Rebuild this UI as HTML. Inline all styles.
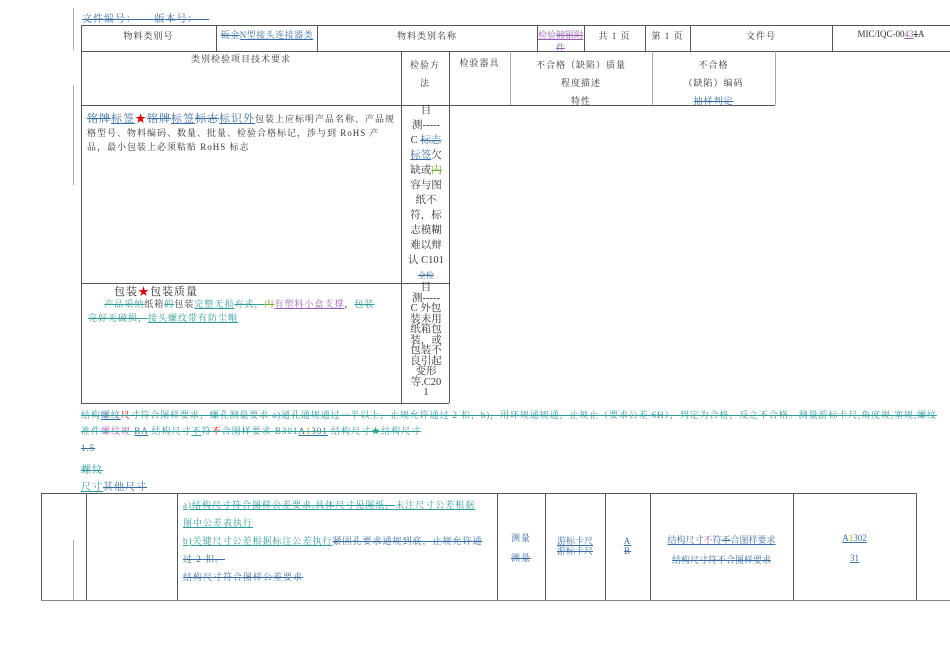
<!DOCTYPE html>
<html><head><meta charset="utf-8"><style>
body{margin:0;width:950px;height:672px;background:#fff;position:relative;overflow:hidden;font-family:"Liberation Serif","Noto Serif CJK SC",serif;font-size:9px;color:#333;letter-spacing:1px}
.a{position:absolute}
.h{position:absolute;height:0;border-top:1px solid #555}
.v{position:absolute;width:0;border-left:1px solid #555}
.g{border-color:#aaa}
.b{color:#3a6ea5}
.t{color:#2f9a9a}
.p{color:#9a5fb5}
.s{text-decoration:line-through}
.u{text-decoration:underline}
.c{text-align:center}
.r{color:#d00}
.n{letter-spacing:0}
.w{white-space:nowrap}
</style></head><body>
<div class="v g" style="left:73px;top:8px;height:42px"></div>
<div class="v g" style="left:73px;top:85px;height:100px"></div>
<div class="v g" style="left:73px;top:540px;height:60px"></div>

<div class="a b s" style="left:82px;top:10px;font-size:10px">文件编号：&nbsp;&nbsp;&nbsp;&nbsp;&nbsp;版本号：&nbsp;&nbsp;&nbsp;</div>

<div class="h" style="left:81px;top:25px;width:869px"></div>
<div class="h" style="left:81px;top:51px;width:869px"></div>
<div class="v" style="left:81px;top:25px;height:378px"></div>
<div class="v" style="left:216px;top:25px;height:26px"></div>
<div class="v" style="left:317px;top:25px;height:26px"></div>
<div class="v" style="left:537px;top:25px;height:26px"></div>
<div class="v" style="left:584px;top:25px;height:26px"></div>
<div class="v" style="left:645px;top:25px;height:26px"></div>
<div class="v" style="left:690px;top:25px;height:26px"></div>
<div class="v" style="left:832px;top:25px;height:26px"></div>
<div class="a c" style="left:81px;top:29px;width:135px">物料类别号</div>
<div class="a c b n" style="left:218px;top:29px;width:98px;height:22px;overflow:hidden;line-height:13px;letter-spacing:0.5px"><span class="s">钣金</span><span class="u">N型接头连接器类</span></div>
<div class="a c" style="left:317px;top:29px;width:220px">物料类别名称</div>
<div class="a c p u n" style="left:537px;top:29px;width:47px;height:22px;overflow:hidden;line-height:13px">检验<span class="s">镀银附件</span></div>
<div class="a c" style="left:584px;top:29px;width:61px">共 1 页</div>
<div class="a c" style="left:645px;top:29px;width:45px">第 1 页</div>
<div class="a c" style="left:690px;top:29px;width:142px">文件号</div>
<div class="a c n" style="left:832px;top:29px;width:118px">MIC/IQC-00<span class="p u">43</span><span class="s">1</span>A</div>

<div class="h" style="left:81px;top:105px;width:694px"></div>
<div class="v" style="left:401px;top:51px;height:352px"></div>
<div class="v" style="left:449px;top:51px;height:352px"></div>
<div class="v g" style="left:510px;top:51px;height:54px"></div>
<div class="v g" style="left:652px;top:51px;height:54px"></div>
<div class="v g" style="left:775px;top:51px;height:54px"></div>
<div class="a c" style="left:81px;top:52px;width:320px">类别检验项目技术要求</div>
<div class="a c" style="left:401px;top:56px;width:48px;line-height:18px">检验方<br>法</div>
<div class="a c" style="left:449px;top:56px;width:61px">检验器具</div>
<div class="a c" style="left:510px;top:56px;width:142px;line-height:18px">不合格（缺陷）质量<br>程度描述<br>特性</div>
<div class="a c" style="left:652px;top:56px;width:123px;line-height:18px">不合格<br>（缺陷）编码<br><span class="b s">抽样判定</span></div>

<div class="a w" style="left:87px;top:112px;line-height:14px"><span class="b s" style="font-size:11px">铭牌</span><span class="b u" style="font-size:11px">标签</span><span class="r" style="font-size:11px">★</span><span class="b s" style="font-size:11px">铭牌</span><span class="b u" style="font-size:11px">标签</span><span class="b s" style="font-size:11px">标志</span><span class="b u" style="font-size:11px">标识外</span>包装上应标明产品名称、产品规<br>格型号、物料编码、数量、批量、检验合格标记，涉与到 RoHS 产<br>品，最小包装上必须粘贴 RoHS 标志</div>
<div class="a c n" style="left:403px;top:103px;width:46px;font-size:10.5px;line-height:15px">目<br>测-----<br>C <span class="b s">标志</span><br><span class="b u">标签</span>欠<br>缺或<span class="s" style="color:#7a3">内</span><br>容与图<br>纸不<br>符，标<br>志模糊<br>难以辩<br>认 C101<br><span class="b s" style="font-size:8px">全检</span></div>

<div class="h" style="left:81px;top:283px;width:368px"></div>
<div class="a" style="left:114px;top:283px;font-size:11px">包装<span class="r">★</span>包装质量</div>
<div class="a w" style="left:88px;top:297px;line-height:14px">&nbsp;&nbsp;&nbsp;&nbsp;&nbsp;<span class="t s">产品采纳</span>纸箱<span class="t s">的</span>包装<span class="t u">完整无损</span><span class="t s">方式，</span><span class="s" style="color:#7a3">内</span><span class="p u">有塑料小盒支撑</span>，<span class="t s">包装</span><br><span class="t s">完好无破损，</span><span class="t u">接头螺纹带有防尘帽</span></div>
<div class="a c n" style="left:403px;top:283px;width:46px;font-size:10.5px;line-height:10.5px">目<br>测-----<br>C 外包<br>装未用<br>纸箱包<br>装，或<br>包装不<br>良引起<br>变形<br>等.C20<br>1</div>
<div class="h" style="left:81px;top:403px;width:368px"></div>

<div class="a t s w" style="left:81px;top:405px;width:869px;overflow:hidden;line-height:21px;letter-spacing:0.9px">结构<span class="b u">螺纹</span><span class="r">尺</span>寸符合图样要求，螺孔测量要求 a)通孔通规通过一半以上，止规允许通过 2 扣，b)，用环规通规通，止规止（要求公差 6H），判定为合格，反之不合格。测量游标卡尺,角度规,塞规,螺纹</div>
<div class="a t s w" style="left:81px;top:426px;line-height:10px">准件<span class="p">螺纹规</span> <span class="b u">BA</span> 结构尺寸<span class="u">不</span>符<span class="r">不</span>合图样要求 B301<span class="b u">A<span style="color:#c90">1</span>301</span> 结构尺寸<span style="color:#2a7">★</span>结构尺寸</div>
<div class="a b s" style="left:81px;top:443px">1.5</div>
<div class="a t s" style="left:81px;top:461px;font-size:10px">螺纹</div>
<div class="a b" style="left:81px;top:478px;font-size:10px"><span class="t u">尺寸</span><span class="s">其他尺寸</span></div>

<div class="h" style="left:41px;top:493px;width:875px"></div>
<div class="h" style="left:41px;top:600px;width:909px;border-color:#888"></div>
<div class="v" style="left:41px;top:493px;height:107px"></div>
<div class="v" style="left:86px;top:493px;height:107px"></div>
<div class="v" style="left:177px;top:493px;height:107px"></div>
<div class="v" style="left:497px;top:493px;height:107px"></div>
<div class="v" style="left:545px;top:493px;height:107px"></div>
<div class="v" style="left:605px;top:493px;height:107px"></div>
<div class="v" style="left:650px;top:493px;height:107px"></div>
<div class="v" style="left:793px;top:493px;height:107px"></div>
<div class="v" style="left:916px;top:493px;height:107px"></div>
<div class="a t w" style="left:183px;top:496px;line-height:18px"><span class="u">a)<span class="s">结构尺寸符合图样公差要求,具体尺寸见图纸，</span>未注尺寸公差根据</span><br><span class="u">图中公差表执行</span><br><span class="u">b)关键尺寸公差根据标注公差执行</span><span class="b s">紧固孔要求通规到底，止规允许通</span><br><span class="b s">过 2 扣。</span><br><span class="b s">结构尺寸符合图样公差要求</span></div>
<div class="a c b" style="left:497px;top:528px;width:48px;line-height:20px">测量<br><span class="s">测量</span></div>
<div class="a c b n" style="left:545px;top:536px;width:60px;line-height:10px"><span class="u">游标卡尺</span><br><span class="s">游标卡尺</span></div>
<div class="a c b" style="left:605px;top:536px;width:45px;line-height:10px"><span class="u">A</span><br><span class="s">B</span></div>
<div class="a c b n" style="left:650px;top:530px;width:143px;line-height:20px"><span class="u">结构尺寸<span class="p">不</span>符<span class="s">不</span>合图样要求</span><br><span class="s">结构尺寸符不合图样要求</span></div>
<div class="a c b n" style="left:793px;top:528px;width:123px;line-height:20px"><span class="u">A<span style="color:#c90">1</span>302</span><br><span class="s u">31</span></div>
</body></html>
